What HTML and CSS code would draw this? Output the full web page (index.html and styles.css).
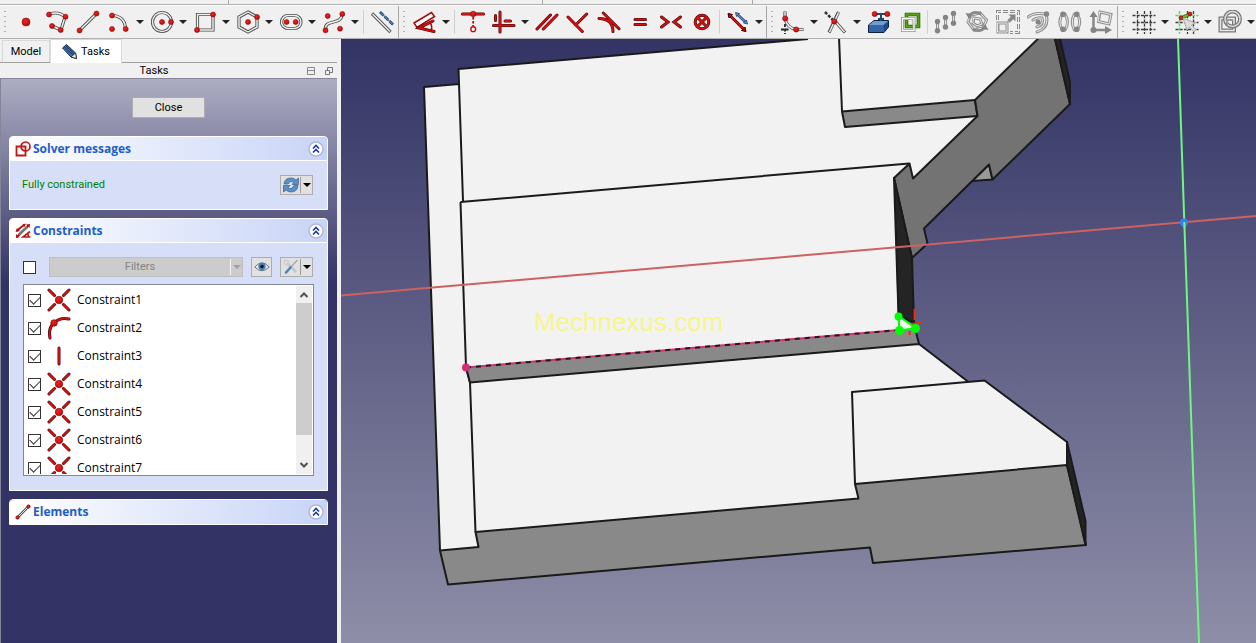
FILE: index.html
```html
<!DOCTYPE html>
<html lang="en">
<head>
<meta charset="utf-8">
<title>Sketcher</title>
<link rel="stylesheet" href="styles.css">
</head>
<body>
<svg class="defs" aria-hidden="true">
  <defs>
    <radialGradient id="ball" cx="0.4" cy="0.35" r="0.7"><stop offset="0" stop-color="#f02020"/><stop offset="0.7" stop-color="#d01010"/><stop offset="1" stop-color="#8c0808"/></radialGradient>
    <symbol id="coincident" viewBox="0 0 24 24">
      <path class="ro" d="M2 2L7.500 7.500M22 2L16.500 7.500M2 22L7.500 16.500M22 22L16.500 16.500"/>
      <path class="ri" d="M2 2L7.500 7.500M22 2L16.500 7.500M2 22L7.500 16.500M22 22L16.500 16.500"/>
      <circle class="dot" cx="12" cy="12" r="3.800"/>
    </symbol>
    <symbol id="tangent-arc" viewBox="0 0 24 24">
      <path class="ro" d="M3 22Q1 12 7 7Q13 1 22 3"/><path class="ri" d="M3 22Q1 12 7 7Q13 1 22 3"/>
      <circle class="dot" cx="7" cy="7" r="3.300"/>
    </symbol>
    <symbol id="vertical" viewBox="0 0 24 24"><path class="ro" d="M12 4V20"/><path class="ri" d="M12 4V20"/></symbol>
    <symbol id="collapse" viewBox="0 0 16 16">
      <circle cx="8" cy="8" r="7" fill="#fff" stroke="#b3b6dc" stroke-width="1.500"/>
      <path d="M5 7.500L8 4.500L11 7.500M5 11.500L8 8.500L11 11.500" fill="none" stroke="#1c3fa0" stroke-width="1.700"/>
    </symbol>
  </defs>
</svg>
<div class="app">
  <div class="strip" aria-hidden="true"><span class="strip-a"></span><span class="strip-b"></span><span class="strip-c"></span><span class="strip-d"></span></div>
  <header class="toolbars">
    <div class="group" role="toolbar" aria-label="Geometries">
      <span class="grip"></span>
      <button class="tool" aria-label="Point"><svg viewBox="0 0 24 24"><circle class="dot" cx="12" cy="12" r="4"/></svg></button>
      <button class="tool" aria-label="Polyline"><svg viewBox="0 0 24 24"><path class="go" d="M4 4Q14 1 20 7L16 20L7 16"/><path class="gi" d="M4 4Q14 1 20 7L16 20L7 16"/><circle class="dot" cx="4" cy="4.500" r="2.500"/><circle class="dot" cx="20.500" cy="6.700" r="2.500"/><circle class="dot" cx="15.700" cy="20" r="2.500"/><circle class="dot" cx="7" cy="16" r="2.500"/></svg></button>
      <button class="tool" aria-label="Line"><svg viewBox="0 0 24 24"><path class="go" d="M3.500 20.500L20.500 3.500"/><path class="gi" d="M3.500 20.500L20.500 3.500"/><circle class="dot" cx="3.500" cy="20.500" r="2.500"/><circle class="dot" cx="20.500" cy="3.500" r="2.500"/></svg></button>
      <button class="tool" aria-label="Arc"><svg viewBox="0 0 24 24"><path class="go" d="M5 5.500Q18 6 18.500 19"/><path class="gi" d="M5 5.500Q18 6 18.500 19"/><circle class="dot" cx="5" cy="5.500" r="2.500"/><circle class="dot" cx="5" cy="19" r="2.500"/><circle class="dot" cx="18.700" cy="19" r="2.500"/></svg></button>
      <button class="caret" aria-label="More arcs"></button>
      <button class="tool" aria-label="Circle"><svg viewBox="0 0 24 24"><circle class="go" cx="12" cy="12" r="9.500"/><circle class="gi" cx="12" cy="12" r="9.500"/><circle class="dot" cx="12" cy="12" r="2.500"/><circle class="dot" cx="21" cy="12" r="2.500"/></svg></button>
      <button class="caret" aria-label="More conics"></button>
      <button class="tool" aria-label="Rectangle"><svg viewBox="0 0 24 24"><path class="go" d="M4.500 4.500H20V20H4.500Z"/><path class="gi" d="M4.500 4.500H20V20H4.500Z"/><circle class="dot" cx="4" cy="20" r="2.500"/><circle class="dot" cx="20" cy="4.500" r="2.500"/></svg></button>
      <button class="caret" aria-label="More rectangles"></button>
      <button class="tool" aria-label="Polygon"><svg viewBox="0 0 24 24"><path class="go" d="M12 2L21 7V17L12 22L3 17V7Z"/><path class="gi" d="M12 2L21 7V17L12 22L3 17V7Z"/><circle class="dot" cx="12" cy="12" r="2.500"/><circle class="dot" cx="21" cy="7" r="2.500"/></svg></button>
      <button class="caret" aria-label="More polygons"></button>
      <button class="tool" aria-label="Slot"><svg viewBox="0 0 24 24"><rect class="go" x="2.500" y="5.500" width="19.500" height="13" rx="6.500"/><rect class="gi" x="2.500" y="5.500" width="19.500" height="13" rx="6.500"/><circle class="dot" cx="7.500" cy="12" r="2.500"/><circle class="dot" cx="16.700" cy="12" r="2.500"/></svg></button>
      <button class="caret" aria-label="More slots"></button>
      <button class="tool" aria-label="B-spline"><svg viewBox="0 0 24 24"><path class="go" d="M3.500 20C2 8 20 16 20 4"/><path class="gi" d="M3.500 20C2 8 20 16 20 4"/><circle class="dot" cx="5.700" cy="6" r="2.500"/><circle class="dot" cx="20.300" cy="4" r="2.500"/><circle class="dot" cx="3.500" cy="20.300" r="2.500"/><circle class="dot" cx="18" cy="18.700" r="2.500"/></svg></button>
      <button class="caret" aria-label="More B-splines"></button>
      <span class="sep"></span>
      <button class="tool" aria-label="Toggle construction"><svg viewBox="0 0 24 24"><path class="go" d="M2 3.500L20.500 22"/><path class="gi" d="M2.500 4L20 21.500"/><path d="M10 2L23 14.500" stroke="#173a66" stroke-width="2.600" stroke-dasharray="5 1.500" fill="none"/><path d="M10.500 2.500L22.500 14" stroke="#4f84bd" stroke-width="1.300" fill="none"/></svg></button>
    </div>
    <div class="group" role="toolbar" aria-label="Constraints">
      <span class="grip"></span>
      <button class="tool" aria-label="Dimension"><svg viewBox="0 0 24 24"><path d="M1 13L18.500 2.500L21.500 6.500L4 17.500Z" fill="#fff" stroke="#a00a0a" stroke-width="1.500"/><path class="ro" d="M20 11L6 18L21 21.500"/><path class="ri" d="M20 11L6 18L21 21.500"/><path d="M16.500 12Q20 16 18 21" fill="none" stroke="#b00" stroke-width="1.500"/></svg></button>
      <button class="caret" aria-label="More dimensions"></button>
      <span class="sep"></span>
      <button class="tool" aria-label="Point on object"><svg viewBox="0 0 24 24"><path class="ro" d="M1.500 4H22.500"/><path class="ri" d="M1.500 4H22.500"/><circle class="dot" cx="12.200" cy="4" r="2.800"/><path d="M12.200 7V16" stroke="#a11" stroke-width="1.800" stroke-dasharray="2.500 1.500"/><circle cx="12.200" cy="19.200" r="2.400" fill="#fff" stroke="#b11" stroke-width="1.400"/></svg></button>
      <button class="tool" aria-label="Horizontal or vertical"><svg viewBox="0 0 24 24"><path class="ro" d="M8 2V22M1.500 15.500H22M3.500 5.500V10.500M13 11H18.500"/><path class="ri" d="M8 2V22M1.500 15.500H22M3.500 5.500V10.500M13 11H18.500"/></svg></button>
      <button class="caret" aria-label="More alignment constraints"></button>
      <button class="tool" aria-label="Parallel"><svg viewBox="0 0 24 24"><path class="ro" d="M2 19L15.500 5M8.300 19L22 5"/><path class="ri" d="M2 19L15.500 5M8.300 19L22 5"/></svg></button>
      <button class="tool" aria-label="Perpendicular"><svg viewBox="0 0 24 24"><path class="ro" d="M2 7L16.300 21.500M20.700 4L9.700 15"/><path class="ri" d="M2 7L16.300 21.500M20.700 4L9.700 15"/></svg></button>
      <button class="tool" aria-label="Tangent"><svg viewBox="0 0 24 24"><path class="ro" d="M2 8.500Q16 9 16 21.500M6.300 3L22 18.700"/><path class="ri" d="M2 8.500Q16 9 16 21.500M6.300 3L22 18.700"/></svg></button>
      <button class="tool" aria-label="Equal"><svg viewBox="0 0 24 24"><path class="ro" d="M7 9.500H17.500M7 14.500H17.500"/><path class="ri" d="M7 9.500H17.500M7 14.500H17.500"/></svg></button>
      <button class="tool" aria-label="Symmetric"><svg viewBox="0 0 24 24"><path class="ro" d="M2.500 7L9 12L2.500 17M21.500 7L15 12L21.500 17"/><path class="ri" d="M2.500 7L9 12L2.500 17M21.500 7L15 12L21.500 17"/></svg></button>
      <button class="tool" aria-label="Block"><svg viewBox="0 0 24 24"><path class="ro" d="M7.500 7.500L16.500 16.500M16.500 7.500L7.500 16.500"/><circle class="ro" cx="12" cy="12" r="6.800"/><circle class="ri" cx="12" cy="12" r="6.800"/><path class="ri" d="M7.500 7.500L16.500 16.500M16.500 7.500L7.500 16.500"/></svg></button>
      <span class="sep"></span>
      <button class="tool" aria-label="Toggle driving constraint"><svg viewBox="0 0 24 24"><path class="ro" d="M3.500 5L18.500 20"/><path class="ri" d="M3.500 5L18.500 20"/><path d="M2 3.500L6.500 4.500L3 8ZM20 21.500L15.500 20.500L19 17Z" fill="#b91010" stroke="#400"/><path d="M11.500 4.500L19.500 12" stroke="#20446f" stroke-width="2.600"/><path d="M12 5L19 11.500" stroke="#5b8cc4" stroke-width="1.200"/><path d="M9.500 2.500L13.500 3.500L10.500 6.500ZM21.500 14L17.500 13L20.500 10Z" fill="#5b8cc4" stroke="#20446f" stroke-width="0.800"/></svg></button>
      <button class="caret" aria-label="More constraint modes"></button>
    </div>
    <div class="group" role="toolbar" aria-label="Sketcher tools">
      <span class="grip"></span>
      <button class="tool" aria-label="Fillet"><svg viewBox="0 0 24 24"><path d="M4 14V24M0 19.500H9" stroke="#222" stroke-width="1.800" stroke-dasharray="3 1.500"/><path class="go" d="M4 1.500V8.500Q6 18 15.500 19.500H22.500"/><path class="gi" d="M4 2V8.500Q6 18 15.500 19.500H22"/><circle class="dot" cx="4.200" cy="8.500" r="2.600"/><circle class="dot" cx="15.200" cy="19.500" r="2.600"/></svg></button>
      <button class="caret" aria-label="More fillets"></button>
      <button class="tool" aria-label="Trim"><svg viewBox="0 0 24 24"><path d="M1 2L9 10" stroke="#333" stroke-width="2.500" stroke-dasharray="3 1.500"/><path class="go" d="M14.500 2L5 22.500M9 9L21 22.500"/><path class="gi" d="M14.500 2.500L5.500 22M9 9L20.500 22"/><circle class="dot" cx="10.300" cy="11.500" r="2.600"/></svg></button>
      <button class="caret" aria-label="More trimming tools"></button>
      <button class="tool" aria-label="External geometry"><svg viewBox="0 0 24 24"><path d="M1.500 15L7 10.500H21.500V17L17 22.500H1.500Z" fill="#3465a4" stroke="#0b1f38"/><path d="M2 15L7 11H21L16.500 15Z" fill="#729fcf"/><path d="M16.800 15V22L21 17V11.500Z" fill="#204a87"/><path d="M8 4H20M14 4V11M11 9H17" stroke="#204a70" stroke-width="2"/><circle class="dot" cx="7.700" cy="4" r="2.600"/><circle class="dot" cx="20.300" cy="4" r="2.600"/></svg></button>
      <button class="tool" aria-label="Carbon copy"><svg viewBox="0 0 24 24"><path d="M8.500 4.500H20.500V16.500H8.500Z" fill="none" stroke="#2f6a08" stroke-width="3.600"/><path d="M8.500 4.500H20.500V16.500H8.500Z" fill="none" stroke="#5c9f18" stroke-width="1.800"/><path d="M4.500 8.500H16V20.500H4.500Z" fill="none" stroke="#8d958d" stroke-width="3"/><path d="M4.500 8.500H16V20.500H4.500Z" fill="none" stroke="#fff" stroke-width="1.300"/></svg></button>
      <span class="sep"></span>
      <button class="tool" disabled aria-label="Array"><svg viewBox="0 0 24 24"><path class="do" d="M3.500 11.500V21M11.500 7.500V17M19.500 3.500V13.500"/><path class="di" d="M3.500 11.500V21M11.500 7.500V17M19.500 3.500V13.500"/><g class="dd"><circle cx="3.500" cy="11.500" r="2.700"/><circle cx="3.500" cy="20.800" r="2.700"/><circle cx="11.500" cy="7.500" r="2.700"/><circle cx="11.500" cy="17" r="2.700"/><circle cx="19.500" cy="3.500" r="2.700"/><circle cx="19.500" cy="13.300" r="2.700"/></g></svg></button>
      <button class="tool" disabled aria-label="Rotate"><svg viewBox="0 0 24 24"><path class="do" d="M6 5L15 3L21.500 10L18 18L9 20L3 12ZM9 8L15 9L17 14L12 16L8 13Z"/><path class="di" d="M6 5L15 3L21.500 10L18 18L9 20L3 12ZM9 8L15 9L17 14L12 16L8 13Z"/><path d="M4 6Q9 0 16 4M20 17Q16 23 8 19.500" fill="none" stroke="#888" stroke-width="2.600"/><path class="dd" d="M0.500 3L7.500 4L4 9ZM23.500 20L16 19L20 14Z"/></svg></button>
      <button class="tool" disabled aria-label="Scale"><svg viewBox="0 0 24 24"><path d="M1.500 10V1.500H22.500V22.500H14" fill="none" stroke="#8b8b8b" stroke-width="3" stroke-dasharray="5 2"/><path d="M1.500 10V1.500H22.500V22.500H14" fill="none" stroke="#eee" stroke-width="1"/><path class="do" d="M2 13H11V22H2Z"/><path class="di" d="M2 13H11V22H2Z"/><path d="M12.500 11.500L17 7" stroke="#8b8b8b" stroke-width="3.500"/><path class="dd" d="M12.500 4.500H19.500V11.500Z"/></svg></button>
      <button class="tool" disabled aria-label="Offset"><svg viewBox="0 0 24 24"><path class="do" d="M1 7Q7 2 19 4Q23 18 10 22M6 10Q10 7 15 8Q17 15 10 17"/><path class="di" d="M1 7Q7 2 19 4Q23 18 10 22M6 10Q10 7 15 8Q17 15 10 17"/><circle class="dd" cx="19.500" cy="4" r="2.700"/><circle class="dd" cx="11" cy="12" r="2.500"/></svg></button>
      <button class="tool" disabled aria-label="Mirror"><svg viewBox="0 0 24 24"><path class="do" d="M4.500 4Q-1 12 4.500 20M7 4Q12 12 7 20M19 4Q24.500 12 19 20M16.500 4Q12 12 16.500 20"/><path class="di" d="M4.500 4Q-1 12 4.500 20M7 4Q12 12 7 20M19 4Q24.500 12 19 20M16.500 4Q12 12 16.500 20"/><g class="dd"><circle cx="5" cy="4.300" r="2.800"/><circle cx="5" cy="19.300" r="2.800"/><circle cx="18.800" cy="4.300" r="2.800"/><circle cx="18.800" cy="19.300" r="2.800"/></g></svg></button>
      <button class="tool" disabled aria-label="Remove axes alignment"><svg viewBox="0 0 24 24"><path d="M4.500 6V20H18" fill="none" stroke="#888" stroke-width="2.500"/><path class="dd" d="M0.500 7L4.500 1L8.500 7ZM16 16L23 20L16 24Z"/><circle class="dd" cx="4.500" cy="20" r="3"/><path class="do" d="M11 2L22 4.500L20 14L9.500 11.500Z"/><path class="di" d="M11 2L22 4.500L20 14L9.500 11.500Z"/></svg></button>
    </div>
    <div class="group last" role="toolbar" aria-label="Edit tools">
      <span class="grip"></span>
      <button class="tool" aria-label="Grid"><svg viewBox="0 0 24 24"><path d="M5.500 1V24M12.500 1V24M18.500 1V24M0.500 5.500H23.500M0.500 12.500H23.500M0.500 19.500H23.500" stroke="#3c3c3c" stroke-width="1.300" stroke-dasharray="3 1.200"/></svg></button>
      <button class="caret" aria-label="Grid options"></button>
      <button class="tool" aria-label="Snap"><svg viewBox="0 0 24 24"><path d="M12.500 1V24M18.500 1V24M0.500 12.500H23.500M0.500 19.500H23.500" stroke="#3c3c3c" stroke-width="1.300" stroke-dasharray="3 1.200"/><path d="M4.500 1V24M0.500 5.500H23.500" stroke="#4be35b" stroke-width="1.500" stroke-dasharray="3 1.200"/><path d="M6.500 8L15 4" stroke="#3c5a10" stroke-width="3.500"/><path d="M7 8L15 4" stroke="#6dbb21" stroke-width="2"/><circle class="dot" cx="6" cy="8" r="2"/><circle class="dot" cx="15" cy="4" r="2"/><path d="M8 8L20 13L16.500 15L21 20L19 22L14.500 17L12 20Z" fill="#dcdcd8" stroke="#aaa"/></svg></button>
      <button class="caret" aria-label="Snap options"></button>
      <button class="tool" aria-label="Rendering order"><svg viewBox="0 0 24 24"><path d="M2.500 8.500H16V20.500H2.500Z" fill="none" stroke="#777" stroke-width="4"/><path d="M2.500 8.500H16V20.500H2.500Z" fill="none" stroke="#e8e8e8" stroke-width="1.500"/><circle cx="14.500" cy="9" r="7.500" fill="none" stroke="#777" stroke-width="4"/><circle cx="14.500" cy="9" r="7.500" fill="none" stroke="#ddd" stroke-width="1.500"/><path d="M9 15V10H15" fill="none" stroke="#999" stroke-width="2"/></svg></button>
      <button class="caret" aria-label="Rendering order options"></button>
    </div>
  </header>
  <div class="work">
    <aside class="side">
      <div class="tabs" role="tablist">
        <button class="tab" role="tab" aria-selected="false">Model</button>
        <button class="tab active" role="tab" aria-selected="true"><svg viewBox="0 0 16 16"><path d="M0.500 4L4.500 0.500L13.500 9L14.500 14.500L9 13Z" fill="#3b6ea8" stroke="#153050"/><path d="M2 2.500L11 11M3.500 1.500L12.500 10" stroke="#16375f" stroke-width="1"/><path d="M9 13L13.500 9L14.500 14.500Z" fill="#eee" stroke="#222" stroke-width="0.800"/></svg>Tasks</button>
      </div>
      <div class="dock-title">
        <span class="dock-name">Tasks</span>
        <button class="dock-btn" aria-label="Collapse panel"><svg viewBox="0 0 10 10"><path d="M1.500 1.500H8.500V8.500H1.500ZM1.500 4.500H8.500" fill="none" stroke="#888"/></svg></button>
        <button class="dock-btn" aria-label="Float panel"><svg viewBox="0 0 10 10"><path d="M1.500 4.500H5.500V8.500H1.500ZM3.500 4V1.500H8.500V6.500H6" fill="none" stroke="#777"/></svg></button>
      </div>
      <div class="tasks">
        <button class="push">Close</button>
        <section class="box">
          <header class="box-head">
            <svg class="head-icon" viewBox="0 0 16 16"><path d="M1.500 5.500H10.500V14.500H1.500Z" fill="none" stroke="#c01818" stroke-width="1.800"/><circle cx="10.500" cy="5.500" r="4.500" fill="none" stroke="#c01818" stroke-width="1.700"/></svg>
            <h2>Solver messages</h2>
            <button class="fold" aria-label="Collapse Solver messages"><svg><use href="#collapse"/></svg></button>
          </header>
          <div class="box-body solver">
            <span class="status">Fully constrained</span>
            <div class="split">
              <button class="split-main" aria-label="Refresh"><svg viewBox="0 0 16 16"><path d="M1 7Q1.500 1 8 1Q11 1 13 3L15.500 1V7.500H9L11 5Q7.500 3 5 7ZM15 8.500Q14.500 15 8 15Q5 15 3 13L0.500 15V8.500H7L5 11Q8.500 13 11 8.500Z" fill="#5b90c6" stroke="#335f90" stroke-width="0.700"/></svg></button>
              <button class="split-arrow" aria-label="Refresh options"></button>
            </div>
          </div>
        </section>
        <section class="box">
          <header class="box-head">
            <svg class="head-icon" viewBox="0 0 16 16"><path d="M1.500 8L9.500 1.500M1.500 14.500L14 2" stroke="#a11" stroke-width="1.800"/><path d="M4 11.500L12 4" stroke="#777" stroke-width="2.400"/><path d="M0.500 9L2 5L5 8ZM11 0.500L7.500 1.500L9.500 4ZM15 1L11 1.500L14.500 5ZM1 15V11L4.500 14Z" fill="#b11"/><path d="M15 8.500L8 14H15.500M12 10Q14 12 13 14" fill="none" stroke="#c01818" stroke-width="1.600"/></svg>
            <h2>Constraints</h2>
            <button class="fold" aria-label="Collapse Constraints"><svg><use href="#collapse"/></svg></button>
          </header>
          <div class="box-body constraints">
            <div class="filter-row">
              <input class="check" type="checkbox" aria-label="Enable filters">
              <div class="combo"><select aria-label="Filters" disabled><option>Filters</option></select><span class="combo-arrow"></span></div>
              <button class="eye" aria-label="Show or hide constraints"><svg viewBox="0 0 16 16"><path d="M0.800 8Q8 -0.500 15.200 8Q8 15.500 0.800 8Z" fill="#e8ecee" stroke="#6b7680"/><circle cx="8" cy="7.500" r="3.700" fill="#4c7eb5"/><circle cx="8" cy="7.500" r="1.800" fill="#0b1c33"/></svg></button>
              <div class="split">
                <button class="split-main" aria-label="Settings"><svg viewBox="0 0 16 16"><path d="M4 4L13 13" stroke="#c4c8c8" stroke-width="2.600"/><circle cx="3.500" cy="3.500" r="2.300" fill="none" stroke="#cdd0d0" stroke-width="1.500"/><path d="M14.500 1L8 8" stroke="#9aa" stroke-width="1.200"/><path d="M7.500 8.500L3 13.500" stroke="#5482b6" stroke-width="2.600" stroke-linecap="round"/></svg></button>
                <button class="split-arrow" aria-label="Settings options"></button>
              </div>
            </div>
            <div class="list">
              <ul>
                <li><label><input class="check" type="checkbox" checked><svg><use href="#coincident"/></svg>Constraint1</label></li>
                <li><label><input class="check" type="checkbox" checked><svg><use href="#tangent-arc"/></svg>Constraint2</label></li>
                <li><label><input class="check" type="checkbox" checked><svg><use href="#vertical"/></svg>Constraint3</label></li>
                <li><label><input class="check" type="checkbox" checked><svg><use href="#coincident"/></svg>Constraint4</label></li>
                <li><label><input class="check" type="checkbox" checked><svg><use href="#coincident"/></svg>Constraint5</label></li>
                <li><label><input class="check" type="checkbox" checked><svg><use href="#coincident"/></svg>Constraint6</label></li>
                <li><label><input class="check" type="checkbox" checked><svg><use href="#coincident"/></svg>Constraint7</label></li>
              </ul>
              <div class="scroll" aria-hidden="true">
                <svg viewBox="0 0 16 17"><path d="M4.500 11L8 7.500L11.500 11" fill="none" stroke="#505050" stroke-width="2"/></svg>
                <span class="thumb"></span><span class="track"></span>
                <svg viewBox="0 0 16 17"><path d="M4.500 6L8 9.500L11.500 6" fill="none" stroke="#505050" stroke-width="2"/></svg>
              </div>
            </div>
          </div>
        </section>
        <section class="box">
          <header class="box-head">
            <svg class="head-icon" viewBox="0 0 16 16"><path d="M2 14L14 2" stroke="#555" stroke-width="2.500"/><path d="M2 14L14 2" stroke="#ddd" stroke-width="1"/><circle class="dot" cx="2.500" cy="13.500" r="1.700"/><circle class="dot" cx="13.500" cy="2.500" r="1.700"/></svg>
            <h2>Elements</h2>
            <button class="fold" aria-label="Collapse Elements"><svg><use href="#collapse"/></svg></button>
          </header>
        </section>
      </div>
    </aside>
    <main class="view">
      <svg class="scene" viewBox="341 39 915 604" preserveAspectRatio="xMinYMin slice" role="img" aria-label="3D model view">
        <path class="light" d="M424 87L459 84L458.500 69L808 39V30H1050L975 100L977 116L913 178L909 164L894 178L898 325L919 344L968 382L984 380.500L1067 442V465L855 484L858.500 498.500L475.500 532L478.500 547L440 550.500Z"/>
        <path class="edge" d="M440 550.500L424 87L459 84M463 201L458.500 69L808 39M839 37L842 111.500M460.500 202L909 163.500M460.500 202L466 367L470 382.500L475.500 532"/>
        <path class="mid edge" d="M842 111.500L975 100L977.500 116L845 127Z"/>
        <path class="mid" d="M466 367.500L916 329L919 344L470 382.500Z"/>
        <path class="edge" d="M466 367.500L470 382.500L919 344L915 328M919 344L968.500 382"/>
        <path class="tri edge" d="M989 164.500L992.500 179.500L972 181Z"/>
        <path class="steep edge" d="M1047 30L975 100L977.500 116L913 178.500L909.500 163.500L894 178L912 258L927.500 243.500L924 228.500L989 164.500L992.500 179.500L1070 104L1053 30Z"/>
        <path class="dark edge" d="M1053 30L1058 30L1070 82V104Z"/>
        <path class="dark edge" d="M894 178L912 258L914 323L898.500 315Z"/>
        <path class="mid edge" d="M440 550.500L478.500 547L475.500 532L858.500 498.500L855 484L1067 465L1086 545L873 563L870 547.500L448 584.500Z"/>
        <path class="edge" d="M855 484L852 392L984.500 380.500L1067 442V465"/>
        <path class="dark edge" d="M1067 442L1085.500 521V545L1067 465Z"/>
        <path d="M341 295.500L1256 216" stroke="#cc6262" stroke-width="2"/>
        <path d="M1178 39L1184.300 222L1199 643" fill="none" stroke="#70f580" stroke-width="2"/>
        <circle cx="1184" cy="222.500" r="4" fill="#2f80ff"/><path d="M1184.300 222L1184.500 228" stroke="#70f580" stroke-width="2"/>
        <path d="M466 367.500L899 330" stroke="#d12f72" stroke-width="2"/>
        <path d="M466 367.500L899 330" stroke="#1c1c1c" stroke-width="2" stroke-dasharray="5 5"/>
        <circle cx="466" cy="367.500" r="4" fill="#d12f72"/>
        <path d="M914.500 309V320M911 324L921 323M909.500 331V335" stroke="#f02a10" stroke-width="2"/>
        <path d="M898.500 316L899.500 330.500L915.500 328Z" fill="#f2f2f2" stroke="#0f0" stroke-width="2"/>
        <g fill="#0f0"><circle cx="898.500" cy="316.500" r="4"/><circle cx="899.500" cy="330.500" r="4.500"/><circle cx="915.500" cy="328.500" r="4.500"/></g>
        <text class="mark" x="534" y="331">Mechnexus.com</text>
      </svg>
    </main>
  </div>
</div>
</body>
</html>
```
FILE: styles.css
```css
* { box-sizing: border-box; }
body { margin: 0; background: #f0f0f0; color: #000; font: 11px/16px Roboto, "Noto Sans", sans-serif; overflow: hidden; }
button { font: inherit; color: inherit; padding: 0; border: 0; background: none; }
svg { display: block; }
.defs { position: absolute; width: 0; height: 0; }
.app { display: flex; flex-direction: column; height: 100vh; }

/* icon strokes */
.dot { fill: url(#ball); stroke: #8a0c0c; stroke-width: 0.6; }
.ro, .ri, .go, .gi, .do, .di { fill: none; stroke-linecap: round; }
.ro { stroke: #4a0505; stroke-width: 3; }
.ri { stroke: #d01212; stroke-width: 1.8; }
.go { stroke: #4b4f4b; stroke-width: 3.2; stroke-linecap: butt; }
.gi { stroke: #f2f2f2; stroke-width: 1.4; stroke-linecap: butt; }
.do { stroke: #909090; stroke-width: 3; }
.di { stroke: #ececec; stroke-width: 1; }
.dd { fill: #858585; }

/* toolbars */
.strip { display: flex; height: 5px; border-bottom: 1px solid #b0b0b0; }
.strip span { border-right: 1px solid #a8a8a8; }
.strip-a { width: 229px; }
.strip-b { width: 314px; }
.strip-c { width: 210px; }
.strip .strip-d { flex: 1; border: 0; }
.toolbars { display: flex; height: 34px; border-top: 1px solid #fff; border-bottom: 1px solid #b0b0b0; overflow: hidden; }
.group { display: flex; align-items: center; flex: none; padding-right: 1px; border-right: 1px solid #a8a8a8; }
.group.last { border-right: 0; }
.grip { width: 10px; height: 26px; background: radial-gradient(circle, #b0b0b0 1px, transparent 1px) 3px 0 / 4px 5px repeat-y; }
.tool { display: grid; place-items: center; width: 31px; height: 32px; }
.tool svg { width: 24px; height: 24px; }
.caret { display: grid; place-items: center; width: 12px; height: 32px; }
.caret::before, .split-arrow::before, .combo-arrow::before { content: ""; border: 4px solid transparent; border-top-color: #222; border-bottom: 0; }
.sep { width: 1px; height: 24px; margin: 0 2px; background: #cfcfcf; }

/* side panel */
.work { display: flex; flex: 1; min-height: 0; }
.side { display: flex; flex-direction: column; width: 337px; flex: none; }
.tabs { display: flex; align-items: flex-end; height: 24px; padding-left: 2px; border-bottom: 1px solid #a0a0a0; }
.tab { width: 48px; height: 22px; border: 1px solid #d9d9d9; border-bottom: 0; }
.tab.active { display: flex; align-items: center; justify-content: center; gap: 3px; width: 72px; height: 24px; margin-bottom: -1px; background: #fff; }
.tab svg { width: 16px; height: 16px; }
.dock-title { display: flex; align-items: center; gap: 8px; height: 15px; padding-right: 3px; }
.dock-name { flex: 1; padding-left: 10px; text-align: center; }
.dock-btn svg { width: 10px; height: 10px; }
.tasks { flex: 1; display: flex; flex-direction: column; gap: 8px; min-height: 0; padding: 18px 9px 0 8px; border: 1px solid #85859a; border-width: 1px 0 0 1px; background: linear-gradient(#adadc3, #333366 204px); }
.push { align-self: center; width: 73px; height: 21px; margin-bottom: 10px; border: 1px solid #adadad; background: #e1e1e1; }
.box { border-radius: 4px 4px 0 0; border: 1px solid #fff; background: #d6dff7; overflow: hidden; }
.box-head { display: flex; align-items: center; height: 24px; gap: 2px; padding: 0 3px 0 5px; border-bottom: 1px solid #fff; background: linear-gradient(90deg, #fff, #c8d4f7); }
.box:last-child .box-head { border-bottom: 0; }
.head-icon { width: 16px; height: 16px; }
.box h2 { flex: 1; margin: 0; color: #215dc6; font: 700 12px/16px "Open Sans", "Noto Sans", sans-serif; }
.fold svg { width: 16px; height: 16px; }
.solver { display: flex; align-items: center; justify-content: space-between; height: 48px; padding: 0 14px 0 12px; }
.status { color: #008000; }
.split { display: flex; width: 33px; height: 20px; border: 1px solid #adadad; background: #e1e1e1; }
.split-main { display: grid; place-items: center; width: 19px; }
.split-main svg, .eye svg { width: 16px; height: 16px; }
.split-arrow { display: grid; place-items: center; flex: 1; margin: 1px 0; border-left: 1px solid #999; }
.split-arrow::before { border-top-color: #000; }
.constraints { padding: 14px 13px; }
.filter-row { display: flex; align-items: center; gap: 8px; margin-bottom: 7px; padding-right: 1px; }
.check { appearance: none; display: grid; place-items: center; flex: none; width: 13px; height: 13px; margin: 0; border: 1px solid #333; background: #fff; }
.check:checked::before { content: ""; width: 9px; height: 5px; margin-bottom: 3px; border: 1px solid #333; border-width: 0 0 1px 1px; transform: rotate(-45deg); }
.filter-row .check { margin-right: 5px; }
.combo { display: flex; flex: 1; height: 20px; border: 1px solid #bfbfbf; background: #ccc; }
.combo select { appearance: none; flex: 1; min-width: 0; padding: 0; border: 0; background: none; color: #838383; opacity: 1; font: inherit; text-align: center; text-align-last: center; }
.combo-arrow { display: grid; place-items: center; width: 12px; margin: 1px 0; border-left: 1px solid #f5f5f5; }
.combo-arrow::before { border-top-color: #a0a0a0; }
.eye { display: grid; place-items: center; width: 21px; height: 20px; border: 1px solid #adadad; background: #e1e1e1; }
.list { display: flex; height: 192px; padding: 1px; border: 1px solid #828790; background: #fff; font: 12px/16px "Open Sans", "Noto Sans", sans-serif; }
.list ul { flex: 1; margin: 0; padding: 0 0 0 3px; list-style: none; overflow: hidden; }
.list label { display: flex; align-items: center; height: 28px; }
.list label svg { width: 24px; height: 24px; margin: 0 6px; }
.scroll { display: flex; flex-direction: column; width: 16px; background: #f0f0f0; }
.scroll svg { width: 16px; height: 17px; }
.thumb { flex: 132; background: #cdcdcd; }
.track { flex: 22; }

/* model view */
.view { flex: 1; min-width: 0; margin-left: 4px; background: linear-gradient(#333365, #8e8ea8); overflow: hidden; }
.scene { width: 100%; height: 100%; }
.edge { stroke: #1a1a1a; stroke-width: 2; fill: none; stroke-linejoin: round; }
.light { fill: #f2f2f2; }
.mid { fill: #898989; }
.tri { fill: #999; }
.steep { fill: #737373; }
.dark { fill: #242424; }
.mark { fill: #f6f68c; font: 26px "Liberation Sans", Arial, sans-serif; }
```
